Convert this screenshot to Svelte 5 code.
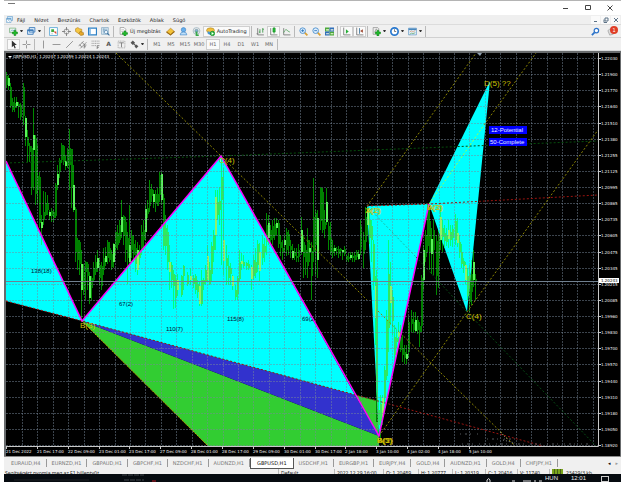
<script>
  const menus = ['Fájl', 'Nézet', 'Beszúrás', 'Chartok', 'Eszközök', 'Ablak', 'Súgó'];
  const frames = ['M1', 'M5', 'M15', 'M30', 'H1', 'H4', 'D1', 'W1', 'MN'];
  const tabs = ['EURAUD,H4', 'EURNZD,H1', 'GBPAUD,H1', 'GBPCHF,H1', 'NZDCHF,H1', 'AUDNZD,H1', 'GBPUSD,H1', 'USDCHF,H1', 'EURGBP,H1', 'EURJPY,H4', 'GOLD,H4', 'AUDNZD,H1', 'GOLD,H4', 'CHFJPY,H1'];
  const prices = ['1.22030', '1.21900', '1.21770', '1.21640', '1.21510', '1.21380', '1.21255', '1.21125', '1.20995', '1.20865', '1.20735', '1.20605', '1.20475', '1.20345', '1.20215', '1.20085', '1.19960', '1.19830', '1.19700', '1.19570', '1.19440', '1.19310', '1.19180', '1.19050', '1.18920'];
  const dates = ['21 Dec 2022', '21 Dec 17:00', '22 Dec 09:00', '23 Dec 01:00', '23 Dec 17:00', '27 Dec 09:00', '28 Dec 01:00', '28 Dec 17:00', '29 Dec 09:00', '30 Dec 01:00', '30 Dec 17:00', '2 Jan 18:00', '3 Jan 10:00', '4 Jan 02:00', '4 Jan 18:00', '5 Jan 10:00'];
  const columns = Array.from({ length: 38 }, (_, i) => Math.round(22 + i * 15.43));
  const rows = prices.map((_, i) => Math.round(58 + i * 16.13));
  const status = [['Default', 56], ['2022.12.29 16:00', 49], ['O: 1.20489', 35], ['H: 1.20777', 34], ['L: 1.20319', 33], ['C: 1.20416', 32], ['V: 11740', 32]];

  // x, high, low, body top, body bottom
  const candles = `6 72 88 76 85|8 75 90 78 86|10 83 108 87 106|12 98 112 102 110|14 97 112 103 108|16 97 108 102 106|18 102 118 104 107|20 103 120 105 117|23 83 125 87 116|25 116 146 118 137|27 130 162 137 146|29 143 162 146 152|31 146 195 148 188|33 108 190 135 150|35 135 205 138 194|37 145 204 176 190|39 172 228 177 223|41 215 245 222 228|43 191 225 212 220|45 192 216 203 215|47 195 215 203 210|49 210 220 212 216|51 208 222 211 216|53 210 222 212 218|55 183 218 185 216|57 165 190 174 185|59 158 178 160 172|61 143 163 145 160|63 145 165 146 162|65 155 170 161 166|67 148 168 150 165|69 129 190 148 165|71 149 208 149 188|73 165 212 185 210|75 207 262 209 252|77 238 270 240 260|79 240 275 242 264|81 250 322 264 290|83 264 295 272 290|85 261 300 262 272|87 262 290 264 276|89 272 304 276 298|91 276 300 278 288|93 262 282 268 280|95 255 275 262 272|97 250 272 258 268|99 258 285 265 278|101 262 290 266 286|103 248 275 258 270|105 247 266 256 262|107 240 264 242 258|109 242 262 248 260|111 250 270 254 267|113 243 268 244 262|115 232 255 232 248|117 225 250 233 245|119 220 243 225 240|121 200 238 217 232|123 215 245 216 236|125 217 262 222 250|127 232 284 238 258|129 205 265 245 262|131 230 258 236 250|133 235 262 244 255|135 240 272 248 264|137 242 275 250 270|139 245 265 250 258|141 225 255 232 250|143 220 250 230 240|145 205 240 209 232|147 200 218 208 214|149 180 212 189 206|151 184 202 189 196|153 190 208 194 202|155 190 212 194 203|157 188 206 194 206|159 172 202 175 195|161 172 205 174 200|163 194 250 198 246|165 215 255 228 246|167 225 270 232 262|169 245 290 262 272|171 262 288 265 280|173 270 309 274 286|175 275 308 280 298|177 274 296 280 290|181 275 297 276 295|183 265 290 266 276|187 272 286 275 284|190 268 285 276 280|193 275 288 278 284|195 274 294 276 290|197 280 298 284 292|199 282 306 286 304|201 270 306 280 304|203 278 290 280 284|205 265 285 270 282|207 245 282 256 280|209 262 285 270 284|211 242 282 246 274|213 230 262 235 250|215 190 250 197 235|217 190 220 202 215|219 187 225 201 210|221 155 265 177 200|223 168 275 240 261|226 245 285 258 266|228 255 285 266 278|230 263 285 268 274|232 275 290 276 286|235 285 300 290 297|237 276 300 278 294|239 250 282 262 279|241 253 270 261 264|243 255 268 262 266|246 262 270 263 266|248 260 270 264 268|251 265 290 267 279|253 255 280 260 276|255 248 278 262 273|257 240 272 244 265|259 243 282 252 271|262 235 265 244 258|264 238 262 246 252|266 213 255 225 242|268 215 245 223 238|270 225 245 230 240|272 220 245 226 238|274 218 240 224 236|276 218 235 223 228|278 220 248 223 244|280 235 256 242 248|282 240 260 248 252|284 235 253 240 245|286 228 256 232 250|288 230 255 234 246|290 240 258 246 250|292 244 260 251 258|294 248 260 252 256|296 248 262 256 258|298 244 262 250 257|301 217 255 230 252|303 235 278 242 257|305 245 275 250 262|307 228 278 240 266|309 240 262 248 252|311 242 300 251 276|313 178 262 217 252|315 210 275 213 245|317 210 278 218 260|320 187 230 188 221|322 188 233 192 230|324 210 238 222 229|326 188 225 202 222|328 222 250 226 240|330 222 255 238 252|332 240 258 248 253|334 245 256 248 251|336 247 255 249 250|338 246 258 249 254|340 248 256 249 251|342 250 260 250 252|344 246 256 249 254|346 255 262 256 260|348 253 262 257 259|350 252 260 255 258|352 252 262 256 258|354 252 262 255 260|356 250 260 252 257|358 250 260 254 259|360 220 255 226 248|363 232 268 240 254|365 207 250 217 242|367 208 236 210 225|369 213 244 220 238|371 220 262 226 240|373 240 290 244 281|375 276 345 286 318|376 270 422 279 422|378 400 435 410 425|380 395 440 404 421|382 395 425 398 417|384 366 404 370 398|386 310 380 320 376|388 240 352 274 328|390 262 325 286 303|392 290 335 297 321|394 325 362 337 355|396 330 348 338 342|398 322 345 332 337|400 325 352 337 350|402 335 362 348 355|404 345 364 352 358|406 345 364 354 359|408 318 358 322 352|411 310 332 319 324|413 312 333 322 330|415 312 332 320 331|417 316 334 320 330|419 322 347 326 332|421 275 332 278 326|423 245 290 250 280|425 230 262 235 257|427 205 252 208 246|429 208 270 221 252|431 228 274 239 254|433 220 275 230 250|436 235 295 241 276|438 230 288 236 258|440 205 250 217 240|442 220 252 228 237|444 225 248 233 241|446 228 246 235 242|448 220 248 230 239|450 225 246 232 240|452 225 247 229 238|455 214 245 221 240|457 218 247 233 243|459 235 258 242 252|461 244 268 252 264|463 258 273 261 266|465 262 284 265 280|467 268 300 276 296|469 265 312 275 302|471 260 305 274 292|473 250 287 262 280|475 274 300 279 282`
    .split('|').map((c) => c.split(' ').map(Number));

  const points = [
    ['B(3)', 80, 328], ['C(4)', 219, 163], ['X(1)', 365, 213], ['A(2)', 366, 213], ['B(3)', 427, 210], ['A(2)', 428, 210],
    ['B(3)', 377, 443], ['A(2)', 378, 443], ['B(5)', 377, 443], ['C(4)', 466, 319], ['D(5) ??', 484, 86]
  ];
  const ratios = [['138(18)', 31, 273], ['67(2)', 119, 306], ['110(7)', 166, 331], ['115(8)', 227, 321], ['69(2)', 302, 321]];
  const cyan = ['6,161 82,321 6,301', '82,321 221,156 355,395', '367,206 429,204 379,436', '429,204 490,81 467,312'];
</script>

{#snippet icon(name)}
  <svg class="ico" viewBox="0 0 16 16" aria-hidden="true">
    {#if name === 'newchart'}
      <path d="M1 2h11v8H1z" fill="#eef8ee" stroke="#4d9a59" /><path d="M3 8l3-3 2 2 3-3" fill="none" stroke="#2f7fc0" /><path d="M9 6h3v3h3v3h-3v3H9v-3H6V9h3z" fill="#1fc12c" stroke="#087c12" />
    {:else if name === 'profiles'}
      <path d="M4 1h10v8H4zM1 5h10v8H1z" fill="#dcecfb" stroke="#3a79b8" stroke-width="1.5" /><path d="M1 6h10" stroke="#3a79b8" stroke-width="2" />
    {:else if name === 'market'}
      <path d="M1 1h14v14H1z" fill="#fff" stroke="#58a9d8" stroke-width="1.5" /><path d="M4 4h5v5H4z" fill="#3cab3c" /><path d="M8 8l5 5V8z" fill="#dc4932" /><path d="M4 12h3" stroke="#8aa" />
    {:else if name === 'navigator'}
      <circle cx="8" cy="8" r="4.5" fill="none" stroke="#777" stroke-width="1.3" /><path d="M8 0v6M8 10v6M0 8h6M10 8h6" stroke="#777" stroke-width="1.5" />
    {:else if name === 'folder'}
      <path d="M1 3l4-2 3 2 4 1v5l-5 3-6-4z" fill="#f5c744" stroke="#b17c13" /><path d="M9 8l6 2v4l-5 1-3-3z" fill="#e8a92a" stroke="#9b6c12" />
    {:else if name === 'terminal'}
      <path d="M1 2h14v12H1z" fill="#fff" stroke="#2b80c6" stroke-width="2" /><path d="M2 3h3v10H2z" fill="#7eb8e6" />
    {:else if name === 'tester'}
      <path d="M1 1h12v12H1z" fill="#dceaf4" stroke="#6595b6" /><path d="M3 4h8M3 7h8M5 2v10" stroke="#6595b6" /><circle cx="9" cy="9" r="3" fill="#eff8ff" stroke="#3a709e" /><path d="M11 11l4 4" stroke="#3a709e" stroke-width="2" />
    {:else if name === 'order'}
      <path d="M2 1h7l3 3v9H2z" fill="#fff" stroke="#777" /><path d="M4 5h5M4 8h4" stroke="#999" /><path d="M9 7h3v3h3v3h-3v3H9v-3H6v-3h3z" fill="#1fc12c" stroke="#087c12" />
    {:else if name === 'book'}
      <path d="M1 9l7-7 7 6-7 6z" fill="#f4c338" stroke="#ac7417" /><path d="M1 9l7 5 7-6" fill="none" stroke="#9a6a14" stroke-width="2" />
    {:else if name === 'cloud'}
      <circle cx="8" cy="5" r="4" fill="#68b1ee" stroke="#3279c1" /><path d="M2 14q0-5 6-5t6 5z" fill="#bfe0fa" stroke="#3279c1" />
    {:else if name === 'signal'}
      <circle cx="8" cy="7" r="6" fill="none" stroke="#9fb5c0" stroke-width="1.5" /><circle cx="8" cy="7" r="3" fill="#80b4cf" stroke="#6b8996" /><path d="M8 8v7h4" stroke="#39a948" stroke-width="3" fill="none" />
    {:else if name === 'auto'}
      <ellipse cx="8" cy="6" rx="7" ry="4.5" fill="#f2bf3c" stroke="#a8831d" /><path d="M3 7q5 3 10 0v5q-5 4-10 0z" fill="#4998d4" /><circle cx="11.500" cy="11.500" r="4" fill="#25bb36" stroke="#0c7d1c" /><path d="M10 9l4 2.500-4 2.500z" fill="#fff" />
    {:else if name === 'bars'}
      <path d="M3 2v12h11M1 12h3" stroke="#777" stroke-width="1.500" fill="none" /><path d="M7 4v7M7 9H5M12 2v8M12 4h2" stroke="#379544" stroke-width="1.500" />
    {:else if name === 'candles'}
      <path d="M3 2v12h12" stroke="#777" stroke-width="1.500" fill="none" /><path d="M9 0v12" stroke="#168a22" /><path d="M7 2h4v7H7z" fill="#24bd36" stroke="#168a22" />
    {:else if name === 'line'}
      <path d="M3 2v12h12" stroke="#777" stroke-width="1.500" fill="none" /><path d="M3 10q4-9 7-3l4 2" stroke="#4a9d55" stroke-width="1.300" fill="none" />
    {:else if name === 'zoomin' || name === 'zoomout'}
      <path d="M10 10l5 5" stroke="#dba132" stroke-width="3" /><circle cx="6.500" cy="6.500" r="5" fill="#dff0ff" stroke="#4288c8" stroke-width="1.500" /><path d={name === 'zoomin' ? 'M4 6.500h5M6.500 4v5' : 'M4 6.500h5'} stroke="#2370b8" stroke-width="1.500" />
    {:else if name === 'tile'}
      <path d="M0 1h8v7H0zM8 8h8v7H8z" fill="#4ca93b" /><path d="M8 1h8v7H8zM0 8h8v7H0z" fill="#316fb9" /><path d="M2 4h5v2H2zM10 4h5v2h-5zM2 11h5v2H2zM10 11h5v2h-5z" fill="#f5fae2" />
    {:else if name === 'scroll' || name === 'shift'}
      <path d="M3 1v13h12" stroke="#777" stroke-width="1.500" fill="none" />{#if name === 'scroll'}<path d="M7 4l5 4-5 4z" fill="#28ae39" />{:else}<path d="M8 2v10" stroke="#39739b" stroke-width="1.500" /><path d="M14 4L9 7l5 3z" fill="#a24d36" />{/if}
    {:else if name === 'indicator'}
      <path d="M2 1h8l2 2v10H2z" fill="#eee" stroke="#777" /><path d="M4 9q3 0 3-5h2" stroke="#666" fill="none" /><path d="M9 6h3v3h3v3h-3v4H9v-4H6V9h3z" fill="#1fc12c" stroke="#087c12" />
    {:else if name === 'clock'}
      <circle cx="8" cy="8" r="6.500" fill="#fff" stroke="#2878ce" stroke-width="3" /><path d="M8 4v4h3" stroke="#555" stroke-width="1.300" fill="none" />
    {:else if name === 'template'}
      <path d="M1 2h14v12H1z" fill="#e4f0fb" stroke="#4a88bd" /><path d="M1 4h14" stroke="#4a88bd" stroke-width="3" /><path d="M3 9l3-2 3 2 4-3" stroke="#ca7d42" fill="none" /><path d="M3 13l3-2 3 1 4-2" stroke="#389346" fill="none" />
    {:else if name === 'cursor'}
      <path d="M5 1v12l3-3 2 5 2-1-2-5h4z" fill="#333" />
    {:else if name === 'cross'}
      <path d="M8 1v6M8 9v6M1 8h6M9 8h6" stroke="#888" stroke-width="1.500" />
    {:else if name === 'vline'}
      <path d="M8 1v14" stroke="#888" stroke-width="1.500" />
    {:else if name === 'hline'}
      <path d="M1 8h14" stroke="#888" stroke-width="1.500" />
    {:else if name === 'trend'}
      <path d="M2 14L14 2" stroke="#888" stroke-width="1.500" />
    {:else if name === 'channel'}
      <path d="M1 11L10 2M4 15L15 4M3 8l4 5M7 4l5 5" stroke="#777" stroke-width="1.300" /><path d="M11 15V9h4M11 12h3" stroke="#444" fill="none" />
    {:else if name === 'fibo'}
      <path d="M1 2h14M1 6h14M1 10h9" stroke="#888" stroke-width="1.300" stroke-dasharray="2 1" /><path d="M11 16v-6h4M11 13h3" stroke="#444" fill="none" />
    {:else if name === 'label'}
      <path d="M2 2h12v12H2z" fill="none" stroke="#888" stroke-dasharray="2 1" /><path d="M4 5h8M8 5v8" stroke="#777" stroke-width="1.500" />
    {:else if name === 'arrows'}
      <path d="M1 5l4-4 4 4-4 4zM8 11l3-3 4 3-4 4z" fill="#555" /><path d="M5 5l6 6" stroke="#555" stroke-width="2" />
    {/if}
  </svg>
{/snippet}

{#snippet tool(name, pressed = false)}
  <button class="tool" class:pressed aria-label={name}>{@render icon(name)}</button>
{/snippet}

{#snippet drop(name)}
  <button class="tool drop" aria-label={name}>{@render icon(name)}<i class="caret"></i></button>
{/snippet}

{#snippet bars()}
  {#each candles as [x, hi, lo, top, bottom], i}
    <path class="wick" d="M{x + 0.5} {hi}V{lo}" />
    <rect class={i % 4 === 1 ? 'body light' : 'body'} {x} y={top} width="2" height={Math.max(1, bottom - top)} />
  {/each}
{/snippet}

<div class="window">
  <header class="title">
    <span class="dash"></span>
    <div class="winbtns">
      <button aria-label="Minimize"><svg viewBox="0 0 6 6"><path d="M0 3.500h5" /></svg></button>
      <button aria-label="Restore"><svg viewBox="0 0 6 6"><path d="M.5.500h5v4h-5z" /></svg></button>
      <button aria-label="Close"><svg viewBox="0 0 6 6"><path d="M.5.500l5 5M5.500.500l-5 5" /></svg></button>
    </div>
  </header>

  <nav class="menu">
    <svg class="app" viewBox="0 0 14 14" aria-hidden="true"><path d="M3 1h10v8H3z" fill="#cbe5f8" stroke="#4b8fc4" /><path d="M1 5h9v8H1z" fill="#fff" stroke="#4b8fc4" /><path d="M1 6h9" stroke="#4b8fc4" stroke-width="2" /><path d="M3 11l2-2 3 2" fill="none" stroke="#4b8fc4" /></svg>
    {#each menus as m}<button>{m}</button>{/each}
    <div class="mdi">
      <button aria-label="Minimize chart"><svg viewBox="0 0 6 6"><path d="M1 4.500h3" /></svg></button>
      <button aria-label="Restore chart"><svg viewBox="0 0 6 6"><path d="M2 1h3v3H2zM1 2.500v3h3" /></svg></button>
      <button aria-label="Close chart"><svg viewBox="0 0 6 6"><path d="M1 1l4 4M5 1L1 5" /></svg></button>
    </div>
  </nav>

  <div class="bar main">
    <div class="group">{@render drop('newchart')}{@render drop('profiles')}</div>
    <div class="group">{#each ['market', 'navigator', 'folder', 'terminal', 'tester'] as n}{@render tool(n)}{/each}</div>
    <div class="group">
      <button class="wide">{@render icon('order')}Új megbízás</button>
      {#each ['book', 'cloud', 'signal'] as n}{@render tool(n)}{/each}
      <button class="wide pressed">{@render icon('auto')}AutoTrading</button>
    </div>
    <div class="group">{@render tool('bars')}{@render tool('candles', true)}{@render tool('line')}</div>
    <div class="group">{@render tool('zoomin')}{@render tool('zoomout')}{@render tool('tile')}</div>
    <div class="group">{@render tool('scroll', true)}{@render tool('shift', true)}</div>
    <div class="group">{@render drop('indicator')}{@render drop('clock')}{@render drop('template')}</div>
    <div class="right">
      <button aria-label="Search"><svg viewBox="0 0 10 10"><path d="M1 9l3-3" stroke="#2c73c9" stroke-width="2" /><circle cx="6" cy="4" r="2.500" fill="#fff" stroke="#2c73c9" stroke-width="1.300" /></svg></button>
      <button class="bell" aria-label="Notifications"><svg viewBox="0 0 10 10"><path d="M1 4q4-4 7 0l-1 4-4 1z" fill="#ddd" stroke="#aaa" /></svg><span>1</span></button>
    </div>
  </div>

  <div class="bar frames">
    <div class="group">{@render tool('cursor', true)}{@render tool('cross')}</div>
    <div class="group">
      {#each ['vline', 'hline', 'trend', 'channel', 'fibo'] as n}{@render tool(n)}{/each}
      <button class="tool letter">A</button>
      {@render tool('label')}{@render drop('arrows')}
    </div>
    <div class="group">
      {#each frames as f}<button class="tool tf" class:pressed={f === 'H1'}>{f}</button>{/each}
    </div>
  </div>

  <svg class="chart" viewBox="4 50 617 406" role="img" aria-label="GBPUSD,H1">
    <defs>
      <clipPath id="pattern">{#each cyan as p}<polygon points={p} />{/each}</clipPath>
      <clipPath id="plot"><rect x="6" y="53" width="592" height="393" /></clipPath>
      <clipPath id="ratio"><polygon points="82,321 221,156 355,395" /></clipPath>
    </defs>
    <rect x="4" y="50" width="617" height="406" fill="#d8dadb" />
    <rect x="4" y="51" width="617" height="405" fill="#686b6d" />
    <rect x="6" y="53" width="614" height="403" fill="#000" />

    <g clip-path="url(#plot)">
      <polygon points="82,321 379,436 379,446 208,446" fill="#32cd32" />
      <polygon points="355,395 378,401 379,436" fill="#32cd32" />
      <polygon points="82,321 355,395 379,436" fill="#3232cd" />
      <path d="M82 321L208 446" stroke="#b8a800" stroke-dasharray="2 1" />
      <g class="on-black">{@render bars()}</g>
      {#each cyan as p}<polygon points={p} fill="#0ff" />{/each}
      <g class="on-cyan" clip-path="url(#pattern)">{@render bars()}</g>

      <g class="grid">
        {#each columns as x}<path d="M{x + 0.5} 53V446" />{/each}
        {#each rows as y}<path d="M6 {y + 0.5}H598" />{/each}
      </g>

      <g class="rays">
        <path stroke="#8c8500" d="M116 53L221 156M355 288L367 300M378 311L515 446M221 156L355 288M367 206L476 53M484 125L536 53M379 436L467 312L598 130" />
        <path stroke="#a6ff40" d="M429 204L484 125" />
        <path stroke="#064d0c" d="M6 163L221 156L598 141" />
        <path stroke="#20b8a0" d="M367 206L416 257" />
        <path stroke="#074b15" d="M416 257L467 312L596 446" />
        <path stroke="#9b1410" d="M6 301L82 321L378 401L543 446M367 206L429 204L598 195" />
      </g>
      <path d="M6 161L82 321L221 156L379 436L429 204" fill="none" stroke="#f0f" stroke-width="1.500" />
      <path d="M6 281.500H598" stroke="#708090" />
      <path d="M460 434h22m5 5h30m-55 5h128" stroke="#54585c" stroke-dasharray="1 4 2 3 1 6" />
      <path d="M500 432l8 8M503 440l12 3" stroke="#8b8f92" stroke-dasharray="1 2" />
      <path d="M477 53h5l-2 3z" fill="#8fa0b0" />
    </g>

    <g class="ratio">{#each ratios as [t, x, y], i}<text {x} {y} clip-path={i === 4 ? 'url(#ratio)' : undefined}>{t}</text>{/each}</g>
    <g class="point">{#each points as [t, x, y]}<text {x} {y}>{t}</text>{/each}</g>

    <g class="badge">
      <rect x="489" y="126" width="38" height="8" /><text x="491" y="132">12-Potential</text>
      <rect x="489" y="138" width="38" height="8" /><text x="490" y="144">50-Complete</text>
    </g>

    <path class="axis" d="M598.500 53V446.500H6" />
    <g class="scale">
      {#each prices as p, i}<path class="axis" d="M599 {rows[i] + 0.5}h2" /><text x="601" y={rows[i] + 2}>{p}</text>{/each}
      {#each dates as d, i}<path class="axis" d="M{Math.round(6 + i * 30.86) + 0.5} 447v2" /><text x={Math.round(6 + i * 30.86)} y="453">{d}</text>{/each}
      <rect x="599" y="278" width="20" height="5" fill="#fff" /><text x="601" y="282" class="now">1.20243</text>
      <path d="M8 56h4l-2 2z" fill="#fff" />
      <text x="13" y="58">GBPUSD,H1&nbsp; 1.20247 1.20259 1.20224 1.20243</text>
    </g>
  </svg>

  <div class="tabs" role="tablist">
    {#each tabs as t, i}<button role="tab" aria-selected={i === 6} class:active={i === 6}>{t}</button>{/each}
    <div class="arrows"><button aria-label="Previous tabs">◂</button><button class="off" aria-label="Next tabs">▸</button></div>
  </div>

  <footer class="status">
    <span class="help">Segítségért nyomja meg az F1 billentyűt</span>
    {#each status as [s, w]}<span class="cell" style="width: {w}px">{s}</span>{/each}
    <span class="cell net"><i class="signal"></i>23429/3 kb</span>
  </footer>

  <div class="taskbar">
    <svg class="wall" viewBox="0 0 160 8" aria-hidden="true"><path d="M118 1h22M120 6h20" stroke="#40464a" stroke-dasharray="5 1" /><path d="M10 6h75" stroke="#1c2023" /><path d="M148 7h4" stroke="#b51820" /></svg>
    <svg class="tray" viewBox="0 0 60 8" aria-hidden="true"><path d="M2 8V6q2-3 3 0v2M27 7h3M38 7h8M50 6v2M54 7h3" fill="none" stroke="#ddd" /></svg>
    <span class="lang">HUN</span><span class="time">12:01</span><span class="note"></span>
  </div>
</div>

<style>
  :global(body) { background: #fff; }
  .window { margin: 0 4px; font: 5px/8px "DejaVu Sans", sans-serif; color: #222; overflow: hidden; }
  button { margin: 0; padding: 0; border: 0; background: none; font: inherit; color: inherit; }
  svg { display: block; }

  .title { height: 15px; box-sizing: border-box; border-top: 1px solid #b4b4b4; display: flex; justify-content: space-between; background: #fff; }
  .dash { width: 7px; height: 1px; margin: 2px 0 0 4px; background: #777; }
  .winbtns { display: flex; align-items: center; }
  .winbtns button { width: 22px; display: flex; justify-content: center; }
  .winbtns svg { width: 6px; height: 6px; fill: none; stroke: #444; }

  .menu { height: 9px; display: flex; align-items: center; gap: 9px; background: #efefef; padding-left: 2px; border-bottom: 1px solid #dcdcdc; }
  .app { width: 7px; height: 7px; margin-right: -5px; }
  .mdi { margin-left: auto; display: flex; gap: 1px; padding-right: 1px; }
  .mdi button { width: 9px; height: 8px; background: #fafafa; display: flex; align-items: center; justify-content: center; }
  .mdi svg { width: 6px; height: 6px; fill: none; stroke: #5d7286; }

  .bar { display: flex; align-items: center; background: #f0f0f0; padding-left: 3px; border-bottom: 1px solid #d0d0d0; }
  .main { height: 12px; }
  .frames { height: 12px; border-bottom: 0; }
  .group { display: flex; align-items: center; border-right: 1px solid #b9b9b9; padding-right: 1px; margin-right: 2px; }
  .tool { width: 13px; height: 11px; display: flex; align-items: center; justify-content: center; color: #555; flex: none; }
  .drop { width: 18px; gap: 2px; }
  .caret { border: 1px solid transparent; border-top: 2px solid #333; border-bottom: 0; width: 1px; }
  .ico { width: 9px; height: 9px; flex: none; }
  .wide { display: flex; align-items: center; gap: 2px; height: 11px; padding: 0 3px; }
  .pressed { background: #fafafa; box-shadow: inset 0 0 0 1px #cfcfcf; }
  .letter { font-size: 6px; font-weight: bold; }
  .tf { width: 14px; color: #666; }
  .right { margin-left: auto; display: flex; gap: 5px; padding-right: 3px; }
  .right button { width: 11px; height: 10px; position: relative; }
  .right svg { width: 9px; height: 9px; }
  .bell span { position: absolute; right: 0; top: 0; width: 8px; height: 8px; border-radius: 4px; background: #df3e27; color: #fff; }

  .chart { width: 100%; height: auto; }
  .on-black, .on-cyan { shape-rendering: crispEdges; }
  .wick { stroke-width: 1px; }
  .on-black .wick { stroke: #008a00; }
  .on-black .body { fill: #008000; }
  .on-black .light { fill: #5bf35b; }
  .on-cyan .wick { stroke: #00ff7c; }
  .on-cyan .body { fill: #30e860; }
  .on-cyan .light { fill: #8ff268; }
  .grid path { stroke: #778899; stroke-opacity: .5; stroke-dasharray: 2 1; shape-rendering: crispEdges; }
  .rays path { fill: none; stroke-dasharray: 2 2; }
  .ratio text { font: 6px "Liberation Sans", sans-serif; fill: #013; }
  .point text { font: 8px "Liberation Sans", sans-serif; fill: #cfc000; }
  .badge rect { fill: #00f; }
  .badge text { font: 6px "Liberation Sans", sans-serif; fill: #eef; }
  .axis { fill: none; stroke: #c8c8c8; }
  .scale text { font: 4px "DejaVu Sans", sans-serif; fill: #f4f4f4; }
  .scale .now { fill: #000; }

  .tabs { height: 12px; display: flex; align-items: center; background: #f0f0f0; border-top: 1px solid #8a8a8a; padding-left: 2px; color: #777; }
  .tabs > button { padding: 0 5px; border-right: 1px solid #999; }
  .tabs > .active { height: 11px; background: #fff; color: #111; border: 1px solid #555; border-top: 0; padding: 0 6px; }
  .arrows { margin-left: auto; display: flex; gap: 5px; padding-right: 3px; color: #111; }
  .arrows .off { color: #999; }

  .status { height: 5px; overflow: hidden; display: flex; background: #f0f0f0; line-height: 8px; font-family: "Noto Sans", sans-serif; white-space: nowrap; }
  .help { flex: 1; padding-left: 1px; }
  .cell { box-sizing: border-box; border-left: 1px solid #bbb; padding-left: 2px; }
  .net { width: 72px; display: flex; gap: 3px; }
  .signal { width: 11px; height: 8px; background: repeating-linear-gradient(90deg, #7ba51c 0 2px, #48631a 2px 3px); }

  .taskbar { height: 8px; overflow: hidden; display: flex; align-items: center; background: #060b10; color: #eee; line-height: 10px; }
  .wall { width: 160px; height: 8px; }
  .tray { width: 60px; height: 8px; margin-left: auto; }
  .lang, .time { font: 6px/8px "Liberation Sans", sans-serif; }
  .time { padding-left: 13px; }
  .note { width: 6px; height: 4px; border: 1px solid #ccc; margin: 2px 12px 0 15px; }
</style>
